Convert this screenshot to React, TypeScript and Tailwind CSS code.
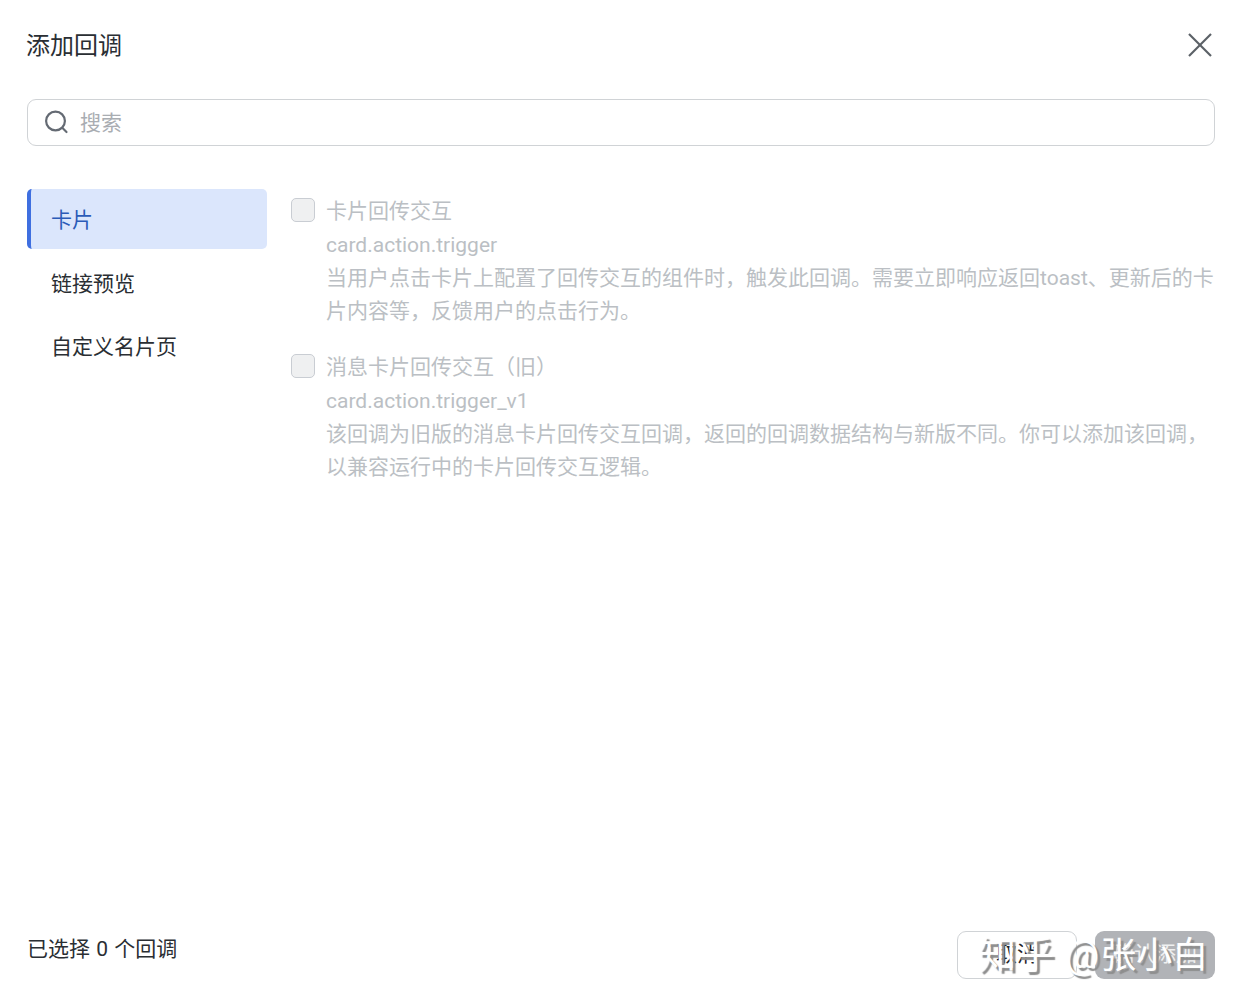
const font = "font-['Roboto','Noto_Sans_CJK_SC',sans-serif]";

type CallbackItemProps = {
  title: string;
  event: string;
  description: string;
};

const CallbackItem = ({ title, event, description }: CallbackItemProps) => {
  return (
    <div className="flex gap-[11px]">
      <div className="mt-[9px] w-6 h-6 shrink-0 rounded-[5px] border border-[#c9cdd3] bg-[#eff0f1]" />
      <div className="flex-1 text-[21px] leading-[33px] text-[#bbbfc4] pt-[1px] -mb-[1px]">
        <div className="pt-[5px] mb-[1px]">{title}</div>
        <div>{event}</div>
        <div>{description}</div>
      </div>
    </div>
  );
};

export default function App() {
  return (
    <div className={`relative w-[1242px] h-[1005px] bg-white flex flex-col pl-[27px] pr-[27px] overflow-hidden ${font}`}>
      <div className="flex justify-between items-center pt-[28px] h-[99px] pb-[35px]">
        <h1 className="text-[24px] leading-[36px] text-[#2a2e33] -ml-[1px]">添加回调</h1>
        <svg width="26" height="26" viewBox="0 0 26 26" className="text-[#5b6066] mr-[2px] -mt-[3px]" fill="none" stroke="currentColor" strokeWidth="2.2">
          <path d="M2 2 L24 24" />
          <path d="M24 2 L2 24" />
        </svg>
      </div>

      <div className="flex items-center h-[47px] rounded-[9px] border border-[#d0d3d6] pl-[15px]">
        <svg width="26" height="26" viewBox="0 0 26 26" className="text-[#646a73] -mt-[2px]" fill="none" stroke="currentColor" strokeWidth="2.2" strokeLinecap="round">
          <circle cx="12.5" cy="12" r="9.4" />
          <path d="M19.5 19 L23.5 23" />
        </svg>
        <span className="ml-[11px] text-[21px] text-[#a9adb2] mt-[1px] translate-y-[1px]">搜索</span>
      </div>

      <div className="flex flex-1 mt-[43px]">
        <div className="w-[240px] shrink-0 text-[21px] text-[#2a2e33]">
          <div className="h-[60px] flex items-center pt-[4px] pl-[20px] rounded-[5px] border-l-4 border-[#3f6fe0] bg-[#dbe6fc] text-[#2b5bb8] mb-[3px]">卡片</div>
          <div className="h-[60px] flex items-center pt-[6px] pl-[24px] mb-[3px]">链接预览</div>
          <div className="h-[60px] flex items-center pt-[6px] pl-[24px]">自定义名片页</div>
        </div>
        <div className="flex-1 flex flex-col gap-[18px] pl-[24px]">
          <CallbackItem
            title="卡片回传交互"
            event="card.action.trigger"
            description="当用户点击卡片上配置了回传交互的组件时，触发此回调。需要立即响应返回toast、更新后的卡片内容等，反馈用户的点击行为。"
          />
          <CallbackItem
            title="消息卡片回传交互（旧）"
            event="card.action.trigger_v1"
            description="该回调为旧版的消息卡片回传交互回调，返回的回调数据结构与新版不同。你可以添加该回调，以兼容运行中的卡片回传交互逻辑。"
          />
        </div>
      </div>

      <div className="flex justify-between items-start pb-[26px]">
        <div className="text-[21px] leading-[33px] text-[#2a2e33] mt-[2px] [word-spacing:1px]">已选择 0 个回调</div>
        <div className="flex gap-[18px]">
          <div className="w-[120px] h-[48px] flex items-center justify-center rounded-[9px] border border-[#d0d3d6] text-[21px] text-[#1f2329]">取消</div>
          <div className="w-[120px] h-[48px] flex items-center justify-center rounded-[9px] bg-[#b1b3b7] text-[21px] text-white/80">确认添加</div>
        </div>
      </div>

      <div className="absolute left-[978px] top-[930px] flex items-baseline text-[38px] leading-[50px] whitespace-nowrap text-white [text-shadow:3px_3px_1px_#8e8e8e]">
        <span>知乎</span>
        <span className="ml-[11px]">@</span>
        <span className="ml-[1px] text-[36px]">张小白</span>
      </div>
    </div>
  );
}
